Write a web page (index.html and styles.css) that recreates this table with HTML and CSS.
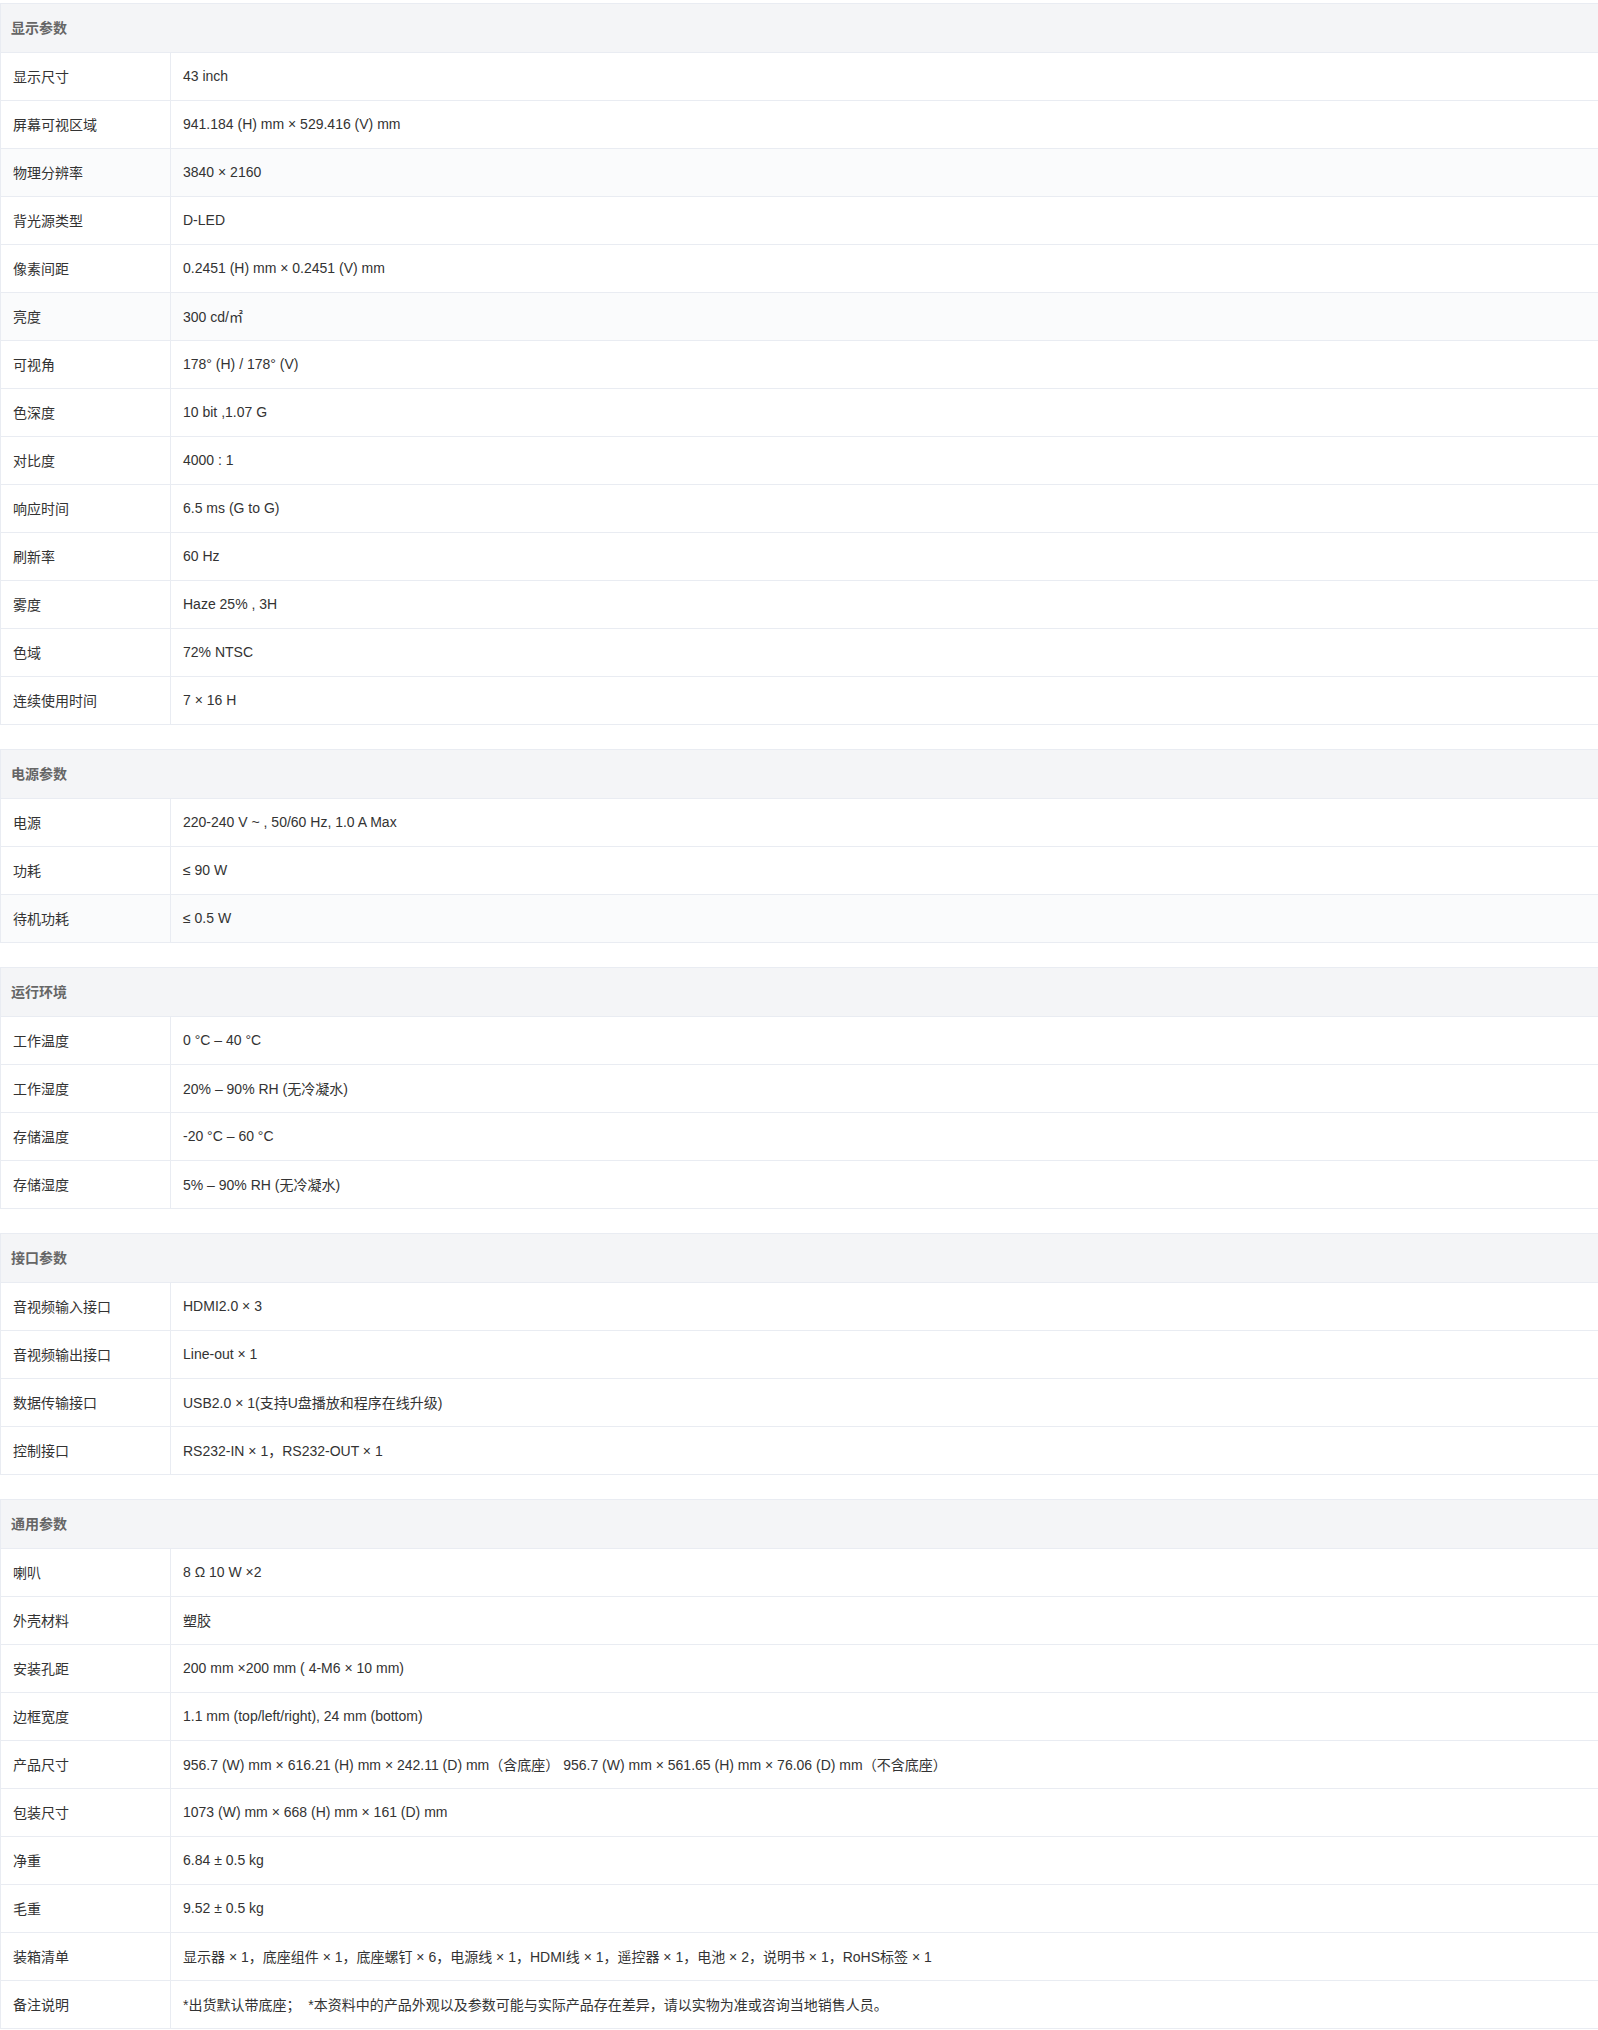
FILE: index.html
```html
<!DOCTYPE html>
<html lang="zh-CN">
<head>
    <meta charset="UTF-8">
    <meta name="viewport" content="width=device-width, initial-scale=1.0">
    <title>规格参数</title>
    <link rel="stylesheet" href="styles.css">
</head>
<body>
    <div class="specs">
        <section class="spec-group">
            <div class="group-title">显示参数</div>
            <div class="spec-row"><div class="spec-label">显示尺寸</div><div class="spec-value">43 inch</div></div>
            <div class="spec-row"><div class="spec-label">屏幕可视区域</div><div class="spec-value">941.184 (H) mm × 529.416 (V) mm</div></div>
            <div class="spec-row shade"><div class="spec-label">物理分辨率</div><div class="spec-value">3840 × 2160</div></div>
            <div class="spec-row"><div class="spec-label">背光源类型</div><div class="spec-value">D-LED</div></div>
            <div class="spec-row"><div class="spec-label">像素间距</div><div class="spec-value">0.2451 (H) mm × 0.2451 (V) mm</div></div>
            <div class="spec-row shade"><div class="spec-label">亮度</div><div class="spec-value">300 cd/㎡</div></div>
            <div class="spec-row"><div class="spec-label">可视角</div><div class="spec-value">178° (H) / 178° (V)</div></div>
            <div class="spec-row"><div class="spec-label">色深度</div><div class="spec-value">10 bit ,1.07 G</div></div>
            <div class="spec-row"><div class="spec-label">对比度</div><div class="spec-value">4000 : 1</div></div>
            <div class="spec-row"><div class="spec-label">响应时间</div><div class="spec-value">6.5 ms (G to G)</div></div>
            <div class="spec-row"><div class="spec-label">刷新率</div><div class="spec-value">60 Hz</div></div>
            <div class="spec-row"><div class="spec-label">雾度</div><div class="spec-value">Haze 25% , 3H</div></div>
            <div class="spec-row"><div class="spec-label">色域</div><div class="spec-value">72% NTSC</div></div>
            <div class="spec-row"><div class="spec-label">连续使用时间</div><div class="spec-value">7 × 16 H</div></div>
        </section>

        <section class="spec-group">
            <div class="group-title">电源参数</div>
            <div class="spec-row"><div class="spec-label">电源</div><div class="spec-value">220-240 V ~ , 50/60 Hz, 1.0 A Max</div></div>
            <div class="spec-row"><div class="spec-label">功耗</div><div class="spec-value">≤ 90 W</div></div>
            <div class="spec-row shade"><div class="spec-label">待机功耗</div><div class="spec-value">≤ 0.5 W</div></div>
        </section>

        <section class="spec-group">
            <div class="group-title">运行环境</div>
            <div class="spec-row"><div class="spec-label">工作温度</div><div class="spec-value">0 °C – 40 °C</div></div>
            <div class="spec-row"><div class="spec-label">工作湿度</div><div class="spec-value">20% – 90% RH (无冷凝水)</div></div>
            <div class="spec-row"><div class="spec-label">存储温度</div><div class="spec-value">-20 °C – 60 °C</div></div>
            <div class="spec-row"><div class="spec-label">存储湿度</div><div class="spec-value">5% – 90% RH (无冷凝水)</div></div>
        </section>

        <section class="spec-group">
            <div class="group-title">接口参数</div>
            <div class="spec-row"><div class="spec-label">音视频输入接口</div><div class="spec-value">HDMI2.0 × 3</div></div>
            <div class="spec-row"><div class="spec-label">音视频输出接口</div><div class="spec-value">Line-out × 1</div></div>
            <div class="spec-row"><div class="spec-label">数据传输接口</div><div class="spec-value">USB2.0 × 1(支持U盘播放和程序在线升级)</div></div>
            <div class="spec-row"><div class="spec-label">控制接口</div><div class="spec-value">RS232-IN × 1，RS232-OUT × 1</div></div>
        </section>

        <section class="spec-group">
            <div class="group-title">通用参数</div>
            <div class="spec-row"><div class="spec-label">喇叭</div><div class="spec-value">8 Ω 10 W ×2</div></div>
            <div class="spec-row"><div class="spec-label">外壳材料</div><div class="spec-value">塑胶</div></div>
            <div class="spec-row"><div class="spec-label">安装孔距</div><div class="spec-value">200 mm ×200 mm ( 4-M6 × 10 mm)</div></div>
            <div class="spec-row"><div class="spec-label">边框宽度</div><div class="spec-value">1.1 mm (top/left/right), 24 mm (bottom)</div></div>
            <div class="spec-row"><div class="spec-label">产品尺寸</div><div class="spec-value">956.7 (W) mm × 616.21 (H) mm × 242.11 (D) mm（含底座） 956.7 (W) mm × 561.65 (H) mm × 76.06 (D) mm（不含底座）</div></div>
            <div class="spec-row"><div class="spec-label">包装尺寸</div><div class="spec-value">1073 (W) mm × 668 (H) mm × 161 (D) mm</div></div>
            <div class="spec-row"><div class="spec-label">净重</div><div class="spec-value">6.84 ± 0.5 kg</div></div>
            <div class="spec-row"><div class="spec-label">毛重</div><div class="spec-value">9.52 ± 0.5 kg</div></div>
            <div class="spec-row"><div class="spec-label">装箱清单</div><div class="spec-value">显示器 × 1，底座组件 × 1，底座螺钉 × 6，电源线 × 1，HDMI线 × 1，遥控器 × 1，电池 × 2，说明书 × 1，RoHS标签 × 1</div></div>
            <div class="spec-row"><div class="spec-label">备注说明</div><div class="spec-value">*出货默认带底座；&nbsp;&nbsp;*本资料中的产品外观以及参数可能与实际产品存在差异，请以实物为准或咨询当地销售人员。</div></div>
        </section>
    </div>
</body>
</html>
```

FILE: styles.css
```css
body{
    margin: 0;
    background-color: #ffffff;
    color: #333333;
    font-family: "Liberation Sans", "Noto Sans CJK SC", sans-serif;
    font-size: 14px;
}

.specs{
    padding-top: 3px;
}

.spec-group{
    border: 1px solid #e9ecf2;
    border-right: none;
    border-bottom: none;
    margin-bottom: 24px;
}

.group-title{
    height: 48px;
    line-height: 48px;
    padding-left: 10px;
    background-color: #f4f5f7;
    border-bottom: 1px solid #e9ecf2;
    color: #666666;
    font-weight: bold;
}

.spec-row{
    display: grid;
    grid-template-columns: 170px 1fr;
    height: 47px;
    border-bottom: 1px solid #e9ecf2;
}

.spec-row.shade{
    background-color: #fafbfc;
}

.spec-label{
    display: flex;
    align-items: center;
    padding-left: 12px;
    padding-bottom: 2px;
    border-right: 1px solid #e9ecf2;
}

.spec-value{
    display: flex;
    align-items: center;
    padding-left: 12px;
    padding-bottom: 2px;
}
```
